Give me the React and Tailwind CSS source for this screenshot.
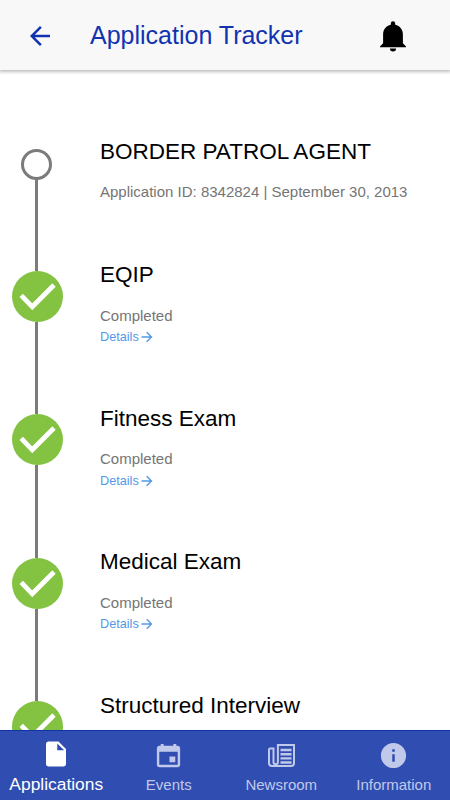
import React from 'react';
import { MdArrowBack, MdInsertDriveFile } from 'react-icons/md';
import { IoMdCalendar, IoMdInformationCircle } from 'react-icons/io';

const steps = [
  { title: 'EQIP', status: 'Completed' },
  { title: 'Fitness Exam', status: 'Completed' },
  { title: 'Medical Exam', status: 'Completed' },
  { title: 'Structured Interview' },
];

const BellIcon = () => (
  <svg width="26" height="31" viewBox="0 0 26 31" fill="currentColor">
    <path d="M13 .3a2.2 2.2 0 0 1 2.2 2.2v1.3C20 5 22.9 8.700 22.900 13.500v8.700l3.100 3.300v.7H0v-.7l3.100-3.300v-8.700C3.100 8.700 6 5 10.800 3.800V2.500A2.200 2.200 0 0 1 13 .3z" />
    <path d="M9.900 27.600h6.200a3.100 2.900 0 0 1-6.200 0z" />
  </svg>
);

const NewsIcon = () => (
  <svg width="27" height="23" viewBox="0 0 27 23" fill="none" stroke="currentColor">
    <path d="M5.500 4.500H2A1 1 0 0 0 1 5.500V19a3 3 0 0 0 3 3h19a3 3 0 0 0 3-3V1H9.900v17a2.200 2.200 0 0 1-4.400 0z" strokeWidth="2" />
    <path d="M12.500 6h11M12.500 10.200h11M12.500 14.400h11M12.500 18.500h11" strokeWidth="2.400" />
  </svg>
);

const DetailsArrow = () => (
  <svg width="12" height="12" viewBox="0 0 12 12" fill="none" stroke="currentColor" strokeWidth="1.400">
    <path d="M.5 6h9.700M5.700 1.200 10.500 6 5.700 10.800" />
  </svg>
);

const Step = ({ title, status }) => (
  <li className="flex h-[143.5px] shrink-0">
    <div className="flex w-[73px] shrink-0 flex-col items-center">
      <div className="ml-[2.5px] flex h-[51px] w-[51px] shrink-0 items-center justify-center rounded-full bg-[#83c341]">
        <svg width="51" height="51" viewBox="0 0 51 51" fill="none" stroke="#fff" strokeWidth="4.8">
          <path d="M9.200 24.300 20.300 35.800 42 14" />
        </svg>
      </div>
      <div className="w-[3px] flex-1 bg-[#7b7b7b]" />
    </div>
    <div className="ml-[27px] -mt-[9.4px]">
      <h2 className="text-[22.5px] leading-[28px] text-black">{title}</h2>
      {status && (
        <>
          <p className="mt-[16.4px] text-[15px] leading-[20px] text-[#757575]">{status}</p>
          <a className="mt-[2.9px] flex items-center text-[12.7px] leading-[18px] text-[#5499e8]">
            <span className="mr-[2.5px]">Details</span>
            <DetailsArrow />
          </a>
        </>
      )}
    </div>
  </li>
);

const Tab = ({ icon, label, active }) => (
  <div className={`flex flex-1 flex-col items-center ${active ? 'text-white' : 'text-[#c1c9ea]'}`}>
    <div className={`flex h-[30px] items-center ${active ? 'mt-[7.5px]' : 'mt-[9.5px]'}`}>{icon}</div>
    <span className={active ? 'mt-[5.5px] text-[17.4px] leading-[20px]' : 'mt-[4.5px] text-[15px] leading-[20px]'}>
      {label}
    </span>
  </div>
);

const App = () => {
  return (
    <div className="flex h-[800px] w-[450px] flex-col overflow-hidden bg-white font-['Liberation_Sans',Arial,sans-serif]">
      {/* Header */}
      <header className="relative flex h-[70px] shrink-0 items-center bg-[#f8f8f8] shadow-[0_1px_3px_1px_rgba(0,0,0,0.25)]">
        <MdArrowBack size={30} className="ml-[25px] mt-[2px] text-[#1133b0]" />
        <h1 className="ml-[35px] text-[25px] leading-[30px] text-[#1133b0]">Application Tracker</h1>
        <div className="ml-auto mr-[44.5px] mt-[2px] text-black">
          <BellIcon />
        </div>
      </header>

      {/* Timeline */}
      <main className="min-h-0 flex-1 overflow-hidden pt-[79px]">
        <ol>
          <li className="flex h-[121.5px]">
            <div className="flex w-[73px] shrink-0 flex-col items-center">
              <div className="h-[31px] w-[31px] shrink-0 rounded-full border-[3px] border-[#7b7b7b]" />
              <div className="w-[3px] flex-1 bg-[#7b7b7b]" />
            </div>
            <div className="ml-[27px] -mt-[11px]">
              <h2 className="text-[22.5px] leading-[28px] text-black">BORDER PATROL AGENT</h2>
              <p className="mt-[16px] text-[15px] leading-[20px] text-[#757575]">
                Application ID: 8342824 | September 30, 2013
              </p>
            </div>
          </li>
          {steps.map((step) => (
            <Step key={step.title} {...step} />
          ))}
        </ol>
      </main>

      {/* Bottom tabs */}
      <nav className="flex h-[70px] shrink-0 border-t border-[#1133a8] bg-[#304db2]">
        <Tab active icon={<MdInsertDriveFile size={30} />} label="Applications" />
        <Tab icon={<IoMdCalendar size={31} />} label="Events" />
        <Tab icon={<NewsIcon />} label="Newsroom" />
        <Tab icon={<IoMdInformationCircle size={31} />} label="Information" />
      </nav>
    </div>
  );
};

export default App;
